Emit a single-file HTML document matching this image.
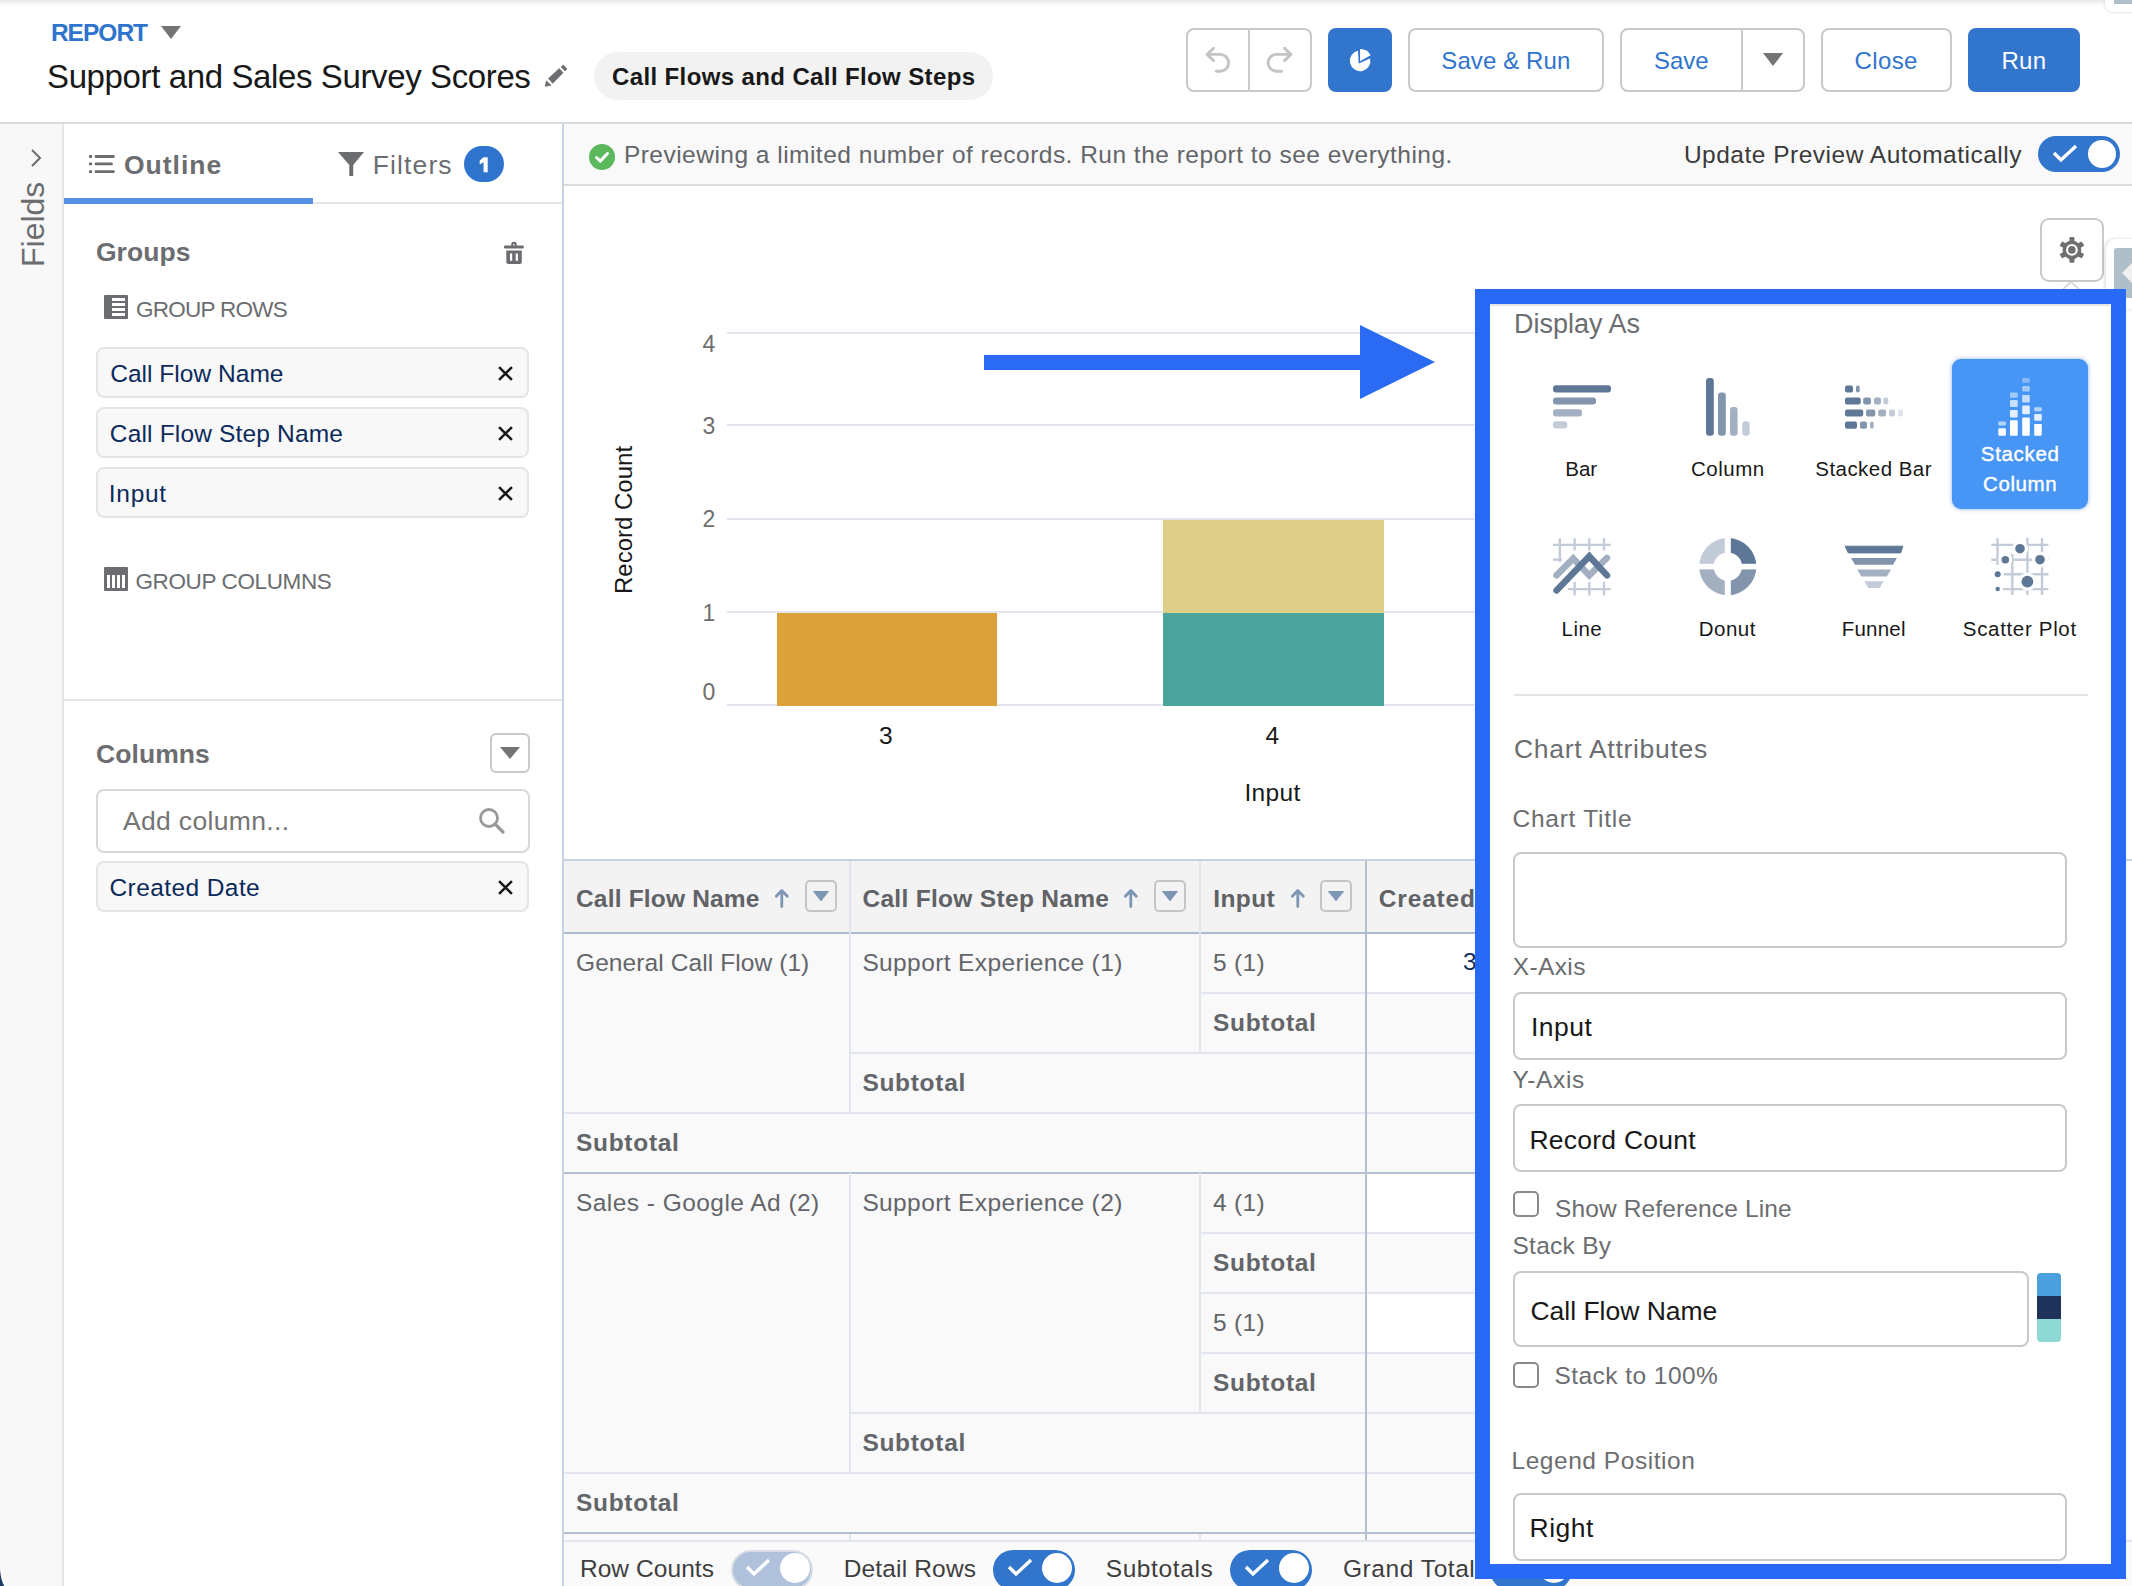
<!DOCTYPE html>
<html><head><meta charset="utf-8">
<style>
*{box-sizing:border-box;margin:0;padding:0}
html,body{width:2132px;height:1586px;overflow:hidden;background:#fff;font-family:"Liberation Sans",sans-serif;color:#181818}
.a{position:absolute}
.t{position:absolute;white-space:nowrap;line-height:1}
.btn{position:absolute;border:2px solid #c9c9c9;border-radius:8px;background:#fff}
.pill{position:absolute;left:96px;width:433px;height:51px;background:#f8f8f8;border:2px solid #e5e5e5;border-radius:8px}
</style></head>
<body>
<div class="a" style="left:0;top:0;width:2132px;height:6px;background:linear-gradient(#e9e9e9,#fff)"></div>
<div class="t" style="left:50.9px;top:21px;font-size:24.5px;font-weight:bold;letter-spacing:-0.98px;color:#2f74cc;">REPORT</div>
<svg class="a" style="left:161px;top:26px" width="20" height="14"><path d="M0 0H20L10 13Z" fill="#747474"/></svg>
<div class="t" style="left:47.0px;top:60px;font-size:33px;letter-spacing:-0.38px;color:#181818;">Support and Sales Survey Scores</div>
<svg class="a" style="left:540px;top:60px" width="32" height="32" viewBox="540 60 32 32"><g fill="#6b6d70" stroke="#6b6d70" stroke-width="0.8" stroke-linejoin="round"><path d="M561.2 66.9L563.3 65.1L566.8 69.1L565 70.9Z"/><path d="M548.6 78.5L559.2 68.6L563 72.7L552.7 83.3Z"/><path d="M546.3 80.9L551 85.2L545.3 86.3Z"/></g></svg>
<div class="a" style="left:594px;top:52px;width:399px;height:48px;border-radius:24px;background:#f2f2f2"></div>
<div class="t" style="left:612.0px;top:65px;font-size:24px;font-weight:bold;letter-spacing:0.38px;color:#181818;">Call Flows and Call Flow Steps</div>
<div class="btn" style="left:1186px;top:28px;width:126px;height:64px"></div>
<div class="a" style="left:1248px;top:29px;width:2px;height:61px;background:#c9c9c9"></div>
<svg class="a" style="left:1195px;top:40px" width="110" height="40" viewBox="1195 40 110 40"><g fill="none" stroke="#c4c4c4" stroke-width="2.9" stroke-linecap="round" stroke-linejoin="round"><path d="M1213.6 48.3L1207 54.4L1213.6 60.6M1207 54.4H1220.3A8.4 8.4 0 0 1 1220.3 71.2H1216.2"/><path d="M1284.5 48.3L1291 54.4L1284.5 60.6M1291 54.4H1276.5A8.4 8.4 0 0 0 1276.5 71.2H1281.7"/></g></svg>
<div class="a" style="left:1328px;top:28px;width:64px;height:64px;border-radius:8px;background:#3275cd"></div>
<svg class="a" style="left:1340px;top:40px" width="40" height="40" viewBox="1340 40 40 40"><path d="M1358.7 63.4L1358 50.8A10.3 10.3 0 1 0 1370.1 58.4Z" fill="#fff"/><path d="M1360 61.3V49.1A11.6 11.6 0 0 1 1370.6 55.3Z" fill="#fff"/></svg>
<div class="btn" style="left:1408px;top:28px;width:196px;height:64px"></div>
<div class="t" style="left:1441.3px;top:49px;font-size:24px;letter-spacing:0.11px;color:#2f74cc;">Save &amp; Run</div>
<div class="btn" style="left:1620px;top:28px;width:185px;height:64px"></div>
<div class="a" style="left:1741px;top:29px;width:2px;height:61px;background:#c9c9c9"></div>
<div class="t" style="left:1654.1px;top:49px;font-size:24px;letter-spacing:-0.07px;color:#2f74cc;">Save</div>
<svg class="a" style="left:1763px;top:53px" width="20" height="14"><path d="M0 0H20L10 13Z" fill="#747474"/></svg>
<div class="btn" style="left:1821px;top:28px;width:131px;height:64px"></div>
<div class="t" style="left:1854.6px;top:49px;font-size:24px;letter-spacing:0.35px;color:#2f74cc;">Close</div>
<div class="a" style="left:1968px;top:28px;width:112px;height:64px;border-radius:8px;background:#3275cd"></div>
<div class="t" style="left:2001.4px;top:49px;font-size:24px;letter-spacing:0.35px;color:#fff;">Run</div>
<div class="a" style="left:2105px;top:-10px;width:40px;height:22px;border-radius:8px;background:#fff;box-shadow:0 0 3px #ccc"></div>
<div class="a" style="left:2114px;top:0;width:20px;height:4px;background:#aebfca"></div>
<div class="a" style="left:0;top:122px;width:2132px;height:2px;background:#d8dadc"></div>
<div class="a" style="left:0;top:124px;width:64px;height:1462px;background:#f8f8f8;border-right:2px solid #e3e5e8"></div>
<svg class="a" style="left:29px;top:148px" width="14" height="20" viewBox="0 0 14 20"><path d="M3 2l8 8-8 8" fill="none" stroke="#6b6b6b" stroke-width="2"/></svg>
<div class="t" style="left:17px;top:267px;font-size:32px;color:#6b6d70;transform-origin:0 0;transform:rotate(-90deg)">Fields</div>
<svg class="a" style="left:0;top:1566px" width="10" height="20" viewBox="0 1566 10 20"><path d="M0 1569.5Q0.8 1580 4.2 1586H0Z" fill="#1c3a6a"/></svg>
<div class="a" style="left:64px;top:124px;width:500px;height:1462px;background:#fff;border-right:2px solid #c5d3e2"></div>
<div class="a" style="left:64px;top:202px;width:498px;height:2px;background:#e5e5e5"></div>
<div class="a" style="left:64px;top:198px;width:249px;height:6px;background:#5590e6"></div>
<svg class="a" style="left:86px;top:152px" width="32" height="24" viewBox="86 152 32 24"><g fill="#6b6d70"><rect x="89" y="155" width="3.1" height="2.9" rx="0.6"/><rect x="89" y="162.4" width="3.1" height="2.9" rx="0.6"/><rect x="89" y="170.2" width="3.1" height="2.9" rx="0.6"/><rect x="94.6" y="155" width="20.2" height="2.9" rx="1.4"/><rect x="94.6" y="162.4" width="18.3" height="2.9" rx="1.4"/><rect x="94.6" y="170.2" width="20.2" height="2.9" rx="1.4"/></g></svg>
<div class="t" style="left:124.0px;top:152px;font-size:26.5px;font-weight:bold;letter-spacing:1.0px;color:#6b6d70;">Outline</div>
<svg class="a" style="left:335px;top:148px" width="32" height="32" viewBox="335 148 32 32"><path d="M338 152H364L353.2 165V176H349.3V165Z" fill="#6b6d70"/></svg>
<div class="t" style="left:372.7px;top:152px;font-size:26.5px;letter-spacing:1.13px;color:#6b6d70;">Filters</div>
<div class="a" style="left:464px;top:146px;width:40px;height:36px;border-radius:18px;background:#2f74cc"></div>
<svg class="a" style="left:476px;top:154px" width="14" height="22" viewBox="476 154 14 22"><path d="M483.6 157.2H487.7V172.2H483.6V162.3L479.7 164.6V160.6Z" fill="#fff"/></svg>
<div class="t" style="left:95.9px;top:239px;font-size:26.5px;font-weight:bold;letter-spacing:0.06px;color:#6b6d70;">Groups</div>
<svg class="a" style="left:500px;top:238px" width="28" height="30" viewBox="500 238 28 30"><g fill="#6b6d70"><path d="M511.2 246V244.5A2.6 2.6 0 0 1 516.8 244.5V246H514.8V244.8A0.8 0.8 0 0 0 513.2 244.8V246Z"/><rect x="504" y="245.4" width="19.8" height="3.1" rx="1.2"/><path d="M506.3 250.6H521.8V262A2 2 0 0 1 519.8 264H508.3A2 2 0 0 1 506.3 262Z"/></g><rect x="510" y="253.5" width="2.2" height="7.3" fill="#fff"/><rect x="515.7" y="253.5" width="2.2" height="7.3" fill="#fff"/></svg>
<svg class="a" style="left:104px;top:295px" width="24" height="24" viewBox="0 0 24 24"><rect x="0" y="0" width="24" height="24" rx="1" fill="#6b6d70"/><rect x="8" y="3" width="13" height="3" fill="#fff"/><rect x="8" y="8" width="13" height="3" fill="#fff"/><rect x="8" y="13" width="13" height="3" fill="#fff"/><rect x="8" y="18" width="13" height="3" fill="#fff"/></svg>
<div class="t" style="left:136.0px;top:299px;font-size:22.5px;letter-spacing:-0.74px;color:#6b6d70;">GROUP ROWS</div>
<div class="pill" style="top:347px"></div>
<div class="t" style="left:110.2px;top:362px;font-size:24.5px;letter-spacing:0.03px;color:#0b2a5b;">Call Flow Name</div>
<svg class="a" style="left:498px;top:366px" width="15" height="15" viewBox="0 0 14 14"><path d="M1 1L13 13M13 1L1 13" stroke="#181818" stroke-width="2.4"/></svg>
<div class="pill" style="top:407px"></div>
<div class="t" style="left:109.8px;top:422px;font-size:24.5px;letter-spacing:0.17px;color:#0b2a5b;">Call Flow Step Name</div>
<svg class="a" style="left:498px;top:426px" width="15" height="15" viewBox="0 0 14 14"><path d="M1 1L13 13M13 1L1 13" stroke="#181818" stroke-width="2.4"/></svg>
<div class="pill" style="top:467px"></div>
<div class="t" style="left:108.8px;top:482px;font-size:24.5px;letter-spacing:0.72px;color:#0b2a5b;">Input</div>
<svg class="a" style="left:498px;top:486px" width="15" height="15" viewBox="0 0 14 14"><path d="M1 1L13 13M13 1L1 13" stroke="#181818" stroke-width="2.4"/></svg>
<svg class="a" style="left:104px;top:567px" width="24" height="24" viewBox="0 0 24 24"><rect x="0" y="0" width="24" height="24" rx="1" fill="#6b6d70"/><rect x="3" y="8" width="3" height="13" fill="#fff"/><rect x="8" y="8" width="3" height="13" fill="#fff"/><rect x="13" y="8" width="3" height="13" fill="#fff"/><rect x="18" y="8" width="3" height="13" fill="#fff"/></svg>
<div class="t" style="left:135.4px;top:571px;font-size:22.5px;letter-spacing:-0.37px;color:#6b6d70;">GROUP COLUMNS</div>
<div class="a" style="left:64px;top:699px;width:498px;height:2px;background:#e5e5e5"></div>
<div class="t" style="left:95.9px;top:741px;font-size:26.5px;font-weight:bold;letter-spacing:0.1px;color:#6b6d70;">Columns</div>
<div class="btn" style="left:490px;top:733px;width:40px;height:40px;border-radius:6px"></div>
<svg class="a" style="left:500px;top:747px" width="20" height="13"><path d="M0 0H20L10 12Z" fill="#747474"/></svg>
<div class="a" style="left:96px;top:789px;width:434px;height:64px;border:2px solid #d8d8d8;border-radius:8px;background:#fff"></div>
<div class="t" style="left:122.9px;top:808px;font-size:26.5px;letter-spacing:0.35px;color:#757575;">Add column...</div>
<svg class="a" style="left:478px;top:807px" width="28" height="28" viewBox="0 0 28 28"><circle cx="11" cy="11" r="8.5" fill="none" stroke="#9a9a9a" stroke-width="2.8"/><path d="M17 17l8 8" stroke="#9a9a9a" stroke-width="3.2" stroke-linecap="round"/></svg>
<div class="pill" style="top:861px"></div>
<div class="t" style="left:109.5px;top:876px;font-size:24.5px;letter-spacing:0.41px;color:#0b2a5b;">Created Date</div>
<svg class="a" style="left:498px;top:880px" width="15" height="15" viewBox="0 0 14 14"><path d="M1 1L13 13M13 1L1 13" stroke="#181818" stroke-width="2.4"/></svg>
<div class="a" style="left:564px;top:124px;width:1568px;height:62px;background:#f9f9f9;border-bottom:2px solid #d8dbdf"></div>
<svg class="a" style="left:589px;top:144px" width="26" height="26" viewBox="0 0 26 26"><circle cx="13" cy="13" r="13" fill="#5cb85c"/><path d="M7.5 13.5l3.8 3.6 7.2-7.6" fill="none" stroke="#fff" stroke-width="3" stroke-linecap="round" stroke-linejoin="round"/></svg>
<div class="t" style="left:623.9px;top:143px;font-size:24.5px;letter-spacing:0.48px;color:#636569;">Previewing a limited number of records. Run the report to see everything.</div>
<div class="t" style="left:1683.9px;top:143px;font-size:24.5px;letter-spacing:0.5px;color:#3a3a3a;">Update Preview Automatically</div>
<div class="a" style="left:2038px;top:136px;width:82px;height:36px;border-radius:18px;background:#3275cd"></div>
<div class="a" style="left:2088px;top:140px;width:28px;height:28px;border-radius:14px;background:#fff"></div>
<svg class="a" style="left:2051px;top:144px" width="28" height="20" viewBox="0 0 28 20"><path d="M3 9l7 7L25 2" fill="none" stroke="#fff" stroke-width="3.4"/></svg>
<div class="btn" style="left:2040px;top:218px;width:64px;height:64px;border-radius:9px"></div>
<svg class="a" style="left:2052px;top:230px" width="40" height="40" viewBox="2052 230 40 40"><g fill="#6f6f6f"><circle cx="2071.9" cy="249.9" r="9.4"/><rect x="2069.4" y="237.1" width="5" height="25.6" rx="1"/><rect x="2069.4" y="237.1" width="5" height="25.6" rx="1" transform="rotate(60 2071.9 249.9)"/><rect x="2069.4" y="237.1" width="5" height="25.6" rx="1" transform="rotate(120 2071.9 249.9)"/></g><circle cx="2071.9" cy="249.9" r="5.9" fill="#fff"/><circle cx="2071.9" cy="249.9" r="3.8" fill="#6f6f6f"/></svg>
<svg class="a" style="left:2060px;top:281px" width="22" height="12"><path d="M0 11L11 1L22 11" fill="#fff" stroke="#d0d0d0" stroke-width="1.5"/></svg>
<div class="a" style="left:2106px;top:239px;width:40px;height:70px;border-radius:10px;background:#fff;box-shadow:-1px 0 4px rgba(0,0,0,0.15)"></div>
<div class="a" style="left:2114px;top:248px;width:30px;height:50px;border-radius:3px;background:#aebfca"></div>
<svg class="a" style="left:2120px;top:262px" width="14" height="22"><path d="M12 1L2 11l10 10" fill="#f0f0f0"/></svg>
<div class="a" style="left:727px;top:332px;width:800px;height:2px;background:#e2e7ee"></div>
<div class="a" style="left:727px;top:424px;width:800px;height:2px;background:#e2e7ee"></div>
<div class="a" style="left:727px;top:518px;width:800px;height:2px;background:#e2e7ee"></div>
<div class="a" style="left:727px;top:611px;width:800px;height:2px;background:#e2e7ee"></div>
<div class="a" style="left:727px;top:704px;width:800px;height:2px;background:#e2e7ee"></div>
<div class="t" style="left:702.5px;top:333px;font-size:23px;color:#6e6e6e">4</div>
<div class="t" style="left:702.5px;top:415px;font-size:23px;color:#6e6e6e">3</div>
<div class="t" style="left:702.5px;top:508px;font-size:23px;color:#6e6e6e">2</div>
<div class="t" style="left:702.5px;top:602px;font-size:23px;color:#6e6e6e">1</div>
<div class="t" style="left:702.5px;top:681px;font-size:23px;color:#6e6e6e">0</div>
<div class="t" style="left:612px;top:594px;font-size:24px;color:#181818;transform-origin:0 0;transform:rotate(-90deg)">Record Count</div>
<div class="a" style="left:777px;top:613px;width:220px;height:93px;background:#dba23a"></div>
<div class="a" style="left:1163px;top:520px;width:221px;height:93px;background:#dfcd8a"></div>
<div class="a" style="left:1163px;top:613px;width:221px;height:93px;background:#4ca59c"></div>
<div class="t" style="left:879.0px;top:724px;font-size:24.5px;letter-spacing:-0.4px;color:#181818;">3</div>
<div class="t" style="left:1265.5px;top:724px;font-size:24.5px;letter-spacing:0.2px;color:#181818;">4</div>
<div class="t" style="left:1244.5px;top:781px;font-size:24.5px;letter-spacing:0.3px;color:#181818;">Input</div>
<svg class="a" style="left:980px;top:320px" width="460" height="84"><path d="M4 35H380V5L455 42L380 79V50H4Z" fill="#2b6af3"/></svg>
<div class="a" style="left:564px;top:859px;width:1568px;height:2px;background:#c9d2dd"></div>
<div class="a" style="left:564px;top:861px;width:1568px;height:71px;background:#f3f3f3"></div>
<div class="a" style="left:564px;top:932px;width:1568px;height:2px;background:#adbbcc"></div>
<div class="a" style="left:564px;top:934px;width:1568px;height:606px;background:#f9f9f9"></div>
<div class="a" style="left:1366px;top:934px;width:766px;height:58px;background:#fff"></div>
<div class="a" style="left:1366px;top:1174px;width:766px;height:58px;background:#fff"></div>
<div class="a" style="left:1366px;top:1294px;width:766px;height:58px;background:#fff"></div>
<div class="a" style="left:1200px;top:992px;width:932px;height:2px;background:#e1e6ee"></div>
<div class="a" style="left:850px;top:1052px;width:1282px;height:2px;background:#e1e6ee"></div>
<div class="a" style="left:564px;top:1112px;width:1568px;height:2px;background:#e1e6ee"></div>
<div class="a" style="left:564px;top:1172px;width:1568px;height:2px;background:#b4c0cf"></div>
<div class="a" style="left:1200px;top:1232px;width:932px;height:2px;background:#e1e6ee"></div>
<div class="a" style="left:1200px;top:1292px;width:932px;height:2px;background:#e1e6ee"></div>
<div class="a" style="left:1200px;top:1352px;width:932px;height:2px;background:#e1e6ee"></div>
<div class="a" style="left:850px;top:1412px;width:1282px;height:2px;background:#e1e6ee"></div>
<div class="a" style="left:564px;top:1472px;width:1568px;height:2px;background:#e1e6ee"></div>
<div class="a" style="left:564px;top:1532px;width:1568px;height:2px;background:#b4c0cf"></div>
<div class="a" style="left:849px;top:861px;width:2px;height:251px;background:#e1e6ee"></div>
<div class="a" style="left:849px;top:1173px;width:2px;height:299px;background:#e1e6ee"></div>
<div class="a" style="left:1199px;top:861px;width:2px;height:191px;background:#e1e6ee"></div>
<div class="a" style="left:1199px;top:1173px;width:2px;height:239px;background:#e1e6ee"></div>
<div class="a" style="left:1365px;top:861px;width:2px;height:679px;background:#b4c0cf"></div>
<div class="a" style="left:849px;top:1534px;width:2px;height:7px;background:#e1e6ee"></div>
<div class="a" style="left:1199px;top:1534px;width:2px;height:7px;background:#e1e6ee"></div>
<div class="t" style="left:576.0px;top:887px;font-size:24.5px;font-weight:bold;letter-spacing:0.18px;color:#606266;">Call Flow Name</div>
<div class="t" style="left:862.4px;top:887px;font-size:24.5px;font-weight:bold;letter-spacing:0.31px;color:#606266;">Call Flow Step Name</div>
<div class="t" style="left:1213.3px;top:887px;font-size:24.5px;font-weight:bold;letter-spacing:0.38px;color:#606266;">Input</div>
<div class="t" style="left:1378.8px;top:887px;font-size:24.5px;font-weight:bold;letter-spacing:0.83px;color:#606266;">Created</div>
<svg class="a" style="left:775px;top:888px" width="14" height="20" viewBox="0 0 14 20"><path d="M6.8 18.5V3.5M1.3 8.3L6.8 2.5L12.3 8.3" fill="none" stroke="#7d96b4" stroke-width="2.8" stroke-linecap="round" stroke-linejoin="round"/></svg>
<div class="a" style="left:805px;top:880px;width:32px;height:32px;border:2px solid #c4c5c9;border-radius:5px;background:#f3f3f3"></div>
<svg class="a" style="left:813px;top:891px" width="16" height="11"><path d="M0 0H16L8 10Z" fill="#7d96b4" stroke="#7d96b4" stroke-width="0.6" stroke-linejoin="round"/></svg>
<svg class="a" style="left:1123.5px;top:888px" width="14" height="20" viewBox="0 0 14 20"><path d="M6.8 18.5V3.5M1.3 8.3L6.8 2.5L12.3 8.3" fill="none" stroke="#7d96b4" stroke-width="2.8" stroke-linecap="round" stroke-linejoin="round"/></svg>
<div class="a" style="left:1154px;top:880px;width:32px;height:32px;border:2px solid #c4c5c9;border-radius:5px;background:#f3f3f3"></div>
<svg class="a" style="left:1162px;top:891px" width="16" height="11"><path d="M0 0H16L8 10Z" fill="#7d96b4" stroke="#7d96b4" stroke-width="0.6" stroke-linejoin="round"/></svg>
<svg class="a" style="left:1291px;top:888px" width="14" height="20" viewBox="0 0 14 20"><path d="M6.8 18.5V3.5M1.3 8.3L6.8 2.5L12.3 8.3" fill="none" stroke="#7d96b4" stroke-width="2.8" stroke-linecap="round" stroke-linejoin="round"/></svg>
<div class="a" style="left:1320px;top:880px;width:32px;height:32px;border:2px solid #c4c5c9;border-radius:5px;background:#f3f3f3"></div>
<svg class="a" style="left:1328px;top:891px" width="16" height="11"><path d="M0 0H16L8 10Z" fill="#7d96b4" stroke="#7d96b4" stroke-width="0.6" stroke-linejoin="round"/></svg>
<div class="t" style="left:576.0px;top:951px;font-size:24.5px;letter-spacing:0.09px;color:#636569;">General Call Flow (1)</div>
<div class="t" style="left:862.4px;top:951px;font-size:24.5px;letter-spacing:0.38px;color:#636569;">Support Experience (1)</div>
<div class="t" style="left:1213.0px;top:951px;font-size:24.5px;letter-spacing:0.32px;color:#636569;">5 (1)</div>
<div class="t" style="left:1463px;top:950px;font-size:24.5px;color:#16325c">3</div>
<div class="t" style="left:1213.0px;top:1011px;font-size:24.5px;font-weight:bold;letter-spacing:0.7px;color:#636569">Subtotal</div>
<div class="t" style="left:862.4px;top:1071px;font-size:24.5px;font-weight:bold;letter-spacing:0.7px;color:#636569">Subtotal</div>
<div class="t" style="left:576px;top:1131px;font-size:24.5px;font-weight:bold;letter-spacing:0.7px;color:#636569">Subtotal</div>
<div class="t" style="left:576.0px;top:1191px;font-size:24.5px;letter-spacing:0.45px;color:#636569;">Sales - Google Ad (2)</div>
<div class="t" style="left:862.4px;top:1191px;font-size:24.5px;letter-spacing:0.38px;color:#636569;">Support Experience (2)</div>
<div class="t" style="left:1213.0px;top:1191px;font-size:24.5px;letter-spacing:0.32px;color:#636569;">4 (1)</div>
<div class="t" style="left:1213.0px;top:1251px;font-size:24.5px;font-weight:bold;letter-spacing:0.7px;color:#636569">Subtotal</div>
<div class="t" style="left:1213.0px;top:1311px;font-size:24.5px;letter-spacing:0.32px;color:#636569;">5 (1)</div>
<div class="t" style="left:1213.0px;top:1371px;font-size:24.5px;font-weight:bold;letter-spacing:0.7px;color:#636569">Subtotal</div>
<div class="t" style="left:862.4px;top:1431px;font-size:24.5px;font-weight:bold;letter-spacing:0.7px;color:#636569">Subtotal</div>
<div class="t" style="left:576px;top:1491px;font-size:24.5px;font-weight:bold;letter-spacing:0.7px;color:#636569">Subtotal</div>
<div class="a" style="left:564px;top:1540px;width:1568px;height:46px;background:#fafafa;border-top:2px solid #e3e8ef"></div>
<div class="t" style="left:579.9px;top:1557px;font-size:24.5px;letter-spacing:0.07px;color:#3e3e3e;">Row Counts</div>
<div class="t" style="left:843.7px;top:1557px;font-size:24.5px;letter-spacing:0.16px;color:#3e3e3e;">Detail Rows</div>
<div class="t" style="left:1105.7px;top:1557px;font-size:24.5px;letter-spacing:0.61px;color:#3e3e3e;">Subtotals</div>
<div class="t" style="left:1343.0px;top:1557px;font-size:24.5px;letter-spacing:0.56px;color:#3e3e3e;">Grand Total</div>
<div class="a" style="left:731px;top:1550px;width:82px;height:40px;border-radius:20px;background:#b0c1dc;border:2px solid #d9dee5;"></div>
<div class="a" style="left:780px;top:1553px;width:30px;height:30px;border-radius:15px;background:#fff"></div>
<svg class="a" style="left:744px;top:1558px" width="28" height="20" viewBox="0 0 28 20"><path d="M3 9l7 7L25 2" fill="none" stroke="#fff" stroke-width="3.4"/></svg>
<div class="a" style="left:993px;top:1550px;width:82px;height:40px;border-radius:20px;background:#3275cd;"></div>
<div class="a" style="left:1042px;top:1553px;width:30px;height:30px;border-radius:15px;background:#fff"></div>
<svg class="a" style="left:1006px;top:1558px" width="28" height="20" viewBox="0 0 28 20"><path d="M3 9l7 7L25 2" fill="none" stroke="#fff" stroke-width="3.4"/></svg>
<div class="a" style="left:1230px;top:1550px;width:82px;height:40px;border-radius:20px;background:#3275cd;"></div>
<div class="a" style="left:1279px;top:1553px;width:30px;height:30px;border-radius:15px;background:#fff"></div>
<svg class="a" style="left:1243px;top:1558px" width="28" height="20" viewBox="0 0 28 20"><path d="M3 9l7 7L25 2" fill="none" stroke="#fff" stroke-width="3.4"/></svg>
<div class="a" style="left:1490px;top:1550px;width:82px;height:40px;border-radius:20px;background:#3275cd;"></div>
<div class="a" style="left:1539px;top:1553px;width:30px;height:30px;border-radius:15px;background:#fff"></div>
<svg class="a" style="left:1503px;top:1558px" width="28" height="20" viewBox="0 0 28 20"><path d="M3 9l7 7L25 2" fill="none" stroke="#fff" stroke-width="3.4"/></svg>

<div class="a" style="left:2125px;top:861px;width:7px;height:677px;background:#fff"></div>
<div class="a" style="left:1475px;top:289px;width:650px;height:1289px;background:#fff"></div>
<div class="a" style="left:1490px;top:304px;width:620px;height:2px;background:#e5e5e5"></div>
<div class="t" style="left:1513.9px;top:311px;font-size:27px;letter-spacing:0.01px;color:#6b6d70;">Display As</div>
<div class="a" style="left:1952px;top:359px;width:136px;height:150px;border-radius:9px;background:#4795f5;box-shadow:0 0 4px rgba(40,100,210,0.5)"></div>
<svg class="a" style="left:1550px;top:376px" width="64" height="62" viewBox="1550 376 64 62">
<rect x="1553" y="385.3" width="58" height="7.2" rx="3" fill="#5f7796"/>
<rect x="1553" y="397.4" width="43" height="7.2" rx="3" fill="#8295ad"/>
<rect x="1553" y="409.3" width="29" height="7.2" rx="3" fill="#a3b0c2"/>
<rect x="1553" y="421.3" width="14.3" height="7.2" rx="3" fill="#c2cbd7"/>
</svg>
<svg class="a" style="left:1700px;top:374px" width="56" height="66" viewBox="1700 374 56 66">
<rect x="1706" y="378" width="7.8" height="57.7" rx="3" fill="#5f7796"/>
<rect x="1718" y="392.5" width="7.8" height="43.2" rx="3" fill="#8295ad"/>
<rect x="1730" y="407" width="7.6" height="28.7" rx="3" fill="#a3b0c2"/>
<rect x="1742.3" y="421.3" width="7.3" height="14.4" rx="3" fill="#c2cbd7"/>
</svg>
<svg class="a" style="left:1840px;top:380px" width="70" height="54" viewBox="1840 380 70 54"><rect x="1845" y="385.4" width="8" height="7.1" rx="2" fill="#5f7796"/><rect x="1856" y="385.4" width="3.7000000000000455" height="7.1" rx="2" fill="#8295ad"/><rect x="1845" y="397.5" width="15.700000000000045" height="7.1" rx="2" fill="#5f7796"/><rect x="1863.2" y="397.5" width="7.7999999999999545" height="7.1" rx="2" fill="#8295ad"/><rect x="1874" y="397.5" width="7" height="7.1" rx="2" fill="#a3b0c2"/><rect x="1883.4" y="397.5" width="4.899999999999864" height="7.1" rx="2" fill="#c2cbd7"/><rect x="1845" y="409.4" width="18.200000000000045" height="7.1" rx="2" fill="#5f7796"/><rect x="1866" y="409.4" width="9.299999999999955" height="7.1" rx="2" fill="#8295ad"/><rect x="1878.2" y="409.4" width="7.7999999999999545" height="7.1" rx="2" fill="#a3b0c2"/><rect x="1889" y="409.4" width="6" height="7.1" rx="2" fill="#c2cbd7"/><rect x="1898" y="409.4" width="4.7999999999999545" height="7.1" rx="2" fill="#dde3ea"/><rect x="1845" y="421.6" width="12" height="7.1" rx="2" fill="#5f7796"/><rect x="1860" y="421.6" width="7" height="7.1" rx="2" fill="#8295ad"/><rect x="1870" y="421.6" width="3.7000000000000455" height="7.1" rx="2" fill="#a3b0c2"/></svg>
<svg class="a" style="left:1990px;top:372px" width="60" height="70" viewBox="1990 372 60 70"><rect x="1998.3" y="428.3" width="7.6" height="7.5" rx="1" fill="#fff" fill-opacity="1"/><rect x="1998.3" y="421.6" width="7.6" height="4.0" rx="1" fill="#fff" fill-opacity="0.6"/><rect x="2010" y="420.2" width="7.7" height="15.600000000000023" rx="1" fill="#fff" fill-opacity="1"/><rect x="2010" y="410" width="7.7" height="7.5" rx="1" fill="#fff" fill-opacity="0.85"/><rect x="2010" y="400" width="7.7" height="7" rx="1" fill="#fff" fill-opacity="0.7"/><rect x="2010" y="392.6" width="7.7" height="5.199999999999989" rx="1" fill="#fff" fill-opacity="0.5"/><rect x="2022.2" y="417.5" width="7.6" height="18.30000000000001" rx="1" fill="#fff" fill-opacity="1"/><rect x="2022.2" y="405.6" width="7.6" height="8.599999999999966" rx="1" fill="#fff" fill-opacity="0.85"/><rect x="2022.2" y="395" width="7.6" height="7.600000000000023" rx="1" fill="#fff" fill-opacity="0.7"/><rect x="2022.2" y="386" width="7.6" height="5.600000000000023" rx="1" fill="#fff" fill-opacity="0.5"/><rect x="2022.2" y="378" width="7.6" height="4.699999999999989" rx="1" fill="#fff" fill-opacity="0.35"/><rect x="2034.2" y="424" width="7.6" height="11.800000000000011" rx="1" fill="#fff" fill-opacity="1"/><rect x="2034.2" y="414" width="7.6" height="6.699999999999989" rx="1" fill="#fff" fill-opacity="0.85"/><rect x="2034.2" y="407.2" width="7.6" height="4.0" rx="1" fill="#fff" fill-opacity="0.6"/></svg>
<svg class="a" style="left:1550px;top:535px" width="64" height="64" viewBox="1550 535 64 64">
<g stroke="#c2cbd7" stroke-width="2.4" fill="none">
<path d="M1553 544.9H1610.7M1559.8 538.3V562M1574.6 538.3V550.6M1589.3 538.3V550.6M1604 538.3V550.6M1553 559.6H1562"/>
<path d="M1568 589.1H1610.7M1574.6 582V595.5M1589.3 582V595.5M1604 582V595.5"/>
</g>
<path d="M1556.5 575.4L1573.2 558.4L1589.3 575.4L1607 557.9" fill="none" stroke="#a3b0c2" stroke-width="6.5" stroke-linecap="round" stroke-linejoin="miter"/>
<path d="M1556.5 590.4L1589.3 556.3L1607 575.4" fill="none" stroke="#5f7796" stroke-width="6.5" stroke-linecap="round" stroke-linejoin="miter"/>
</svg>
<svg class="a" style="left:1695px;top:534px" width="66" height="66" viewBox="1695 534 66 66"><path d="M1727.80 538.00A28.6 28.6 0 0 1 1756.40 566.60L1742.00 566.60A14.2 14.2 0 0 0 1727.80 552.40Z" fill="#5f7796"/><path d="M1756.40 566.60A28.6 28.6 0 0 1 1727.80 595.20L1727.80 580.80A14.2 14.2 0 0 0 1742.00 566.60Z" fill="#8295ad"/><path d="M1727.80 595.20A28.6 28.6 0 0 1 1699.20 566.60L1713.60 566.60A14.2 14.2 0 0 0 1727.80 580.80Z" fill="#a3b0c2"/><path d="M1699.20 566.60A28.6 28.6 0 0 1 1727.80 538.00L1727.80 552.40A14.2 14.2 0 0 0 1713.60 566.60Z" fill="#c2cbd7"/><rect x="1724.8" y="534" width="6" height="66" fill="#fff"/><rect x="1695" y="563.8" width="66" height="5.6" fill="#fff"/></svg>
<svg class="a" style="left:1840px;top:540px" width="70" height="54" viewBox="1840 540 70 54">
<path d="M1845.1 546.2H1902.8L1900.7 552.9H1848.3Z" fill="#5f7796" stroke="#5f7796" stroke-width="1" stroke-linejoin="round"/>
<path d="M1851 558H1896.9L1893 564.7H1855Z" fill="#8295ad"/>
<path d="M1857.2 569.4H1891L1886.9 576.6H1861.3Z" fill="#a3b0c2"/>
<path d="M1864.3 581.2H1883.6L1879.6 587.9H1868.3Z" fill="#c2cbd7"/>
</svg>
<svg class="a" style="left:1988px;top:535px" width="64" height="64" viewBox="1988 535 64 64"><g stroke="#c2cbd7" stroke-width="2.4"><path d="M1991.3 544.9H2048.4M1991.3 559.7H2048.4M2002 574.2H2048.4M2000 589.1H2048.4M1997.5 538V565M2012.3 554V595M2027.4 538V595M2042 538V595"/></g><circle cx="2020" cy="548.7" r="8.0" fill="#fff"/><circle cx="2005.3" cy="559.7" r="7.0" fill="#fff"/><circle cx="2040" cy="559.7" r="8.0" fill="#fff"/><circle cx="1997.7" cy="574.2" r="6.2" fill="#fff"/><circle cx="2027.4" cy="581.6" r="9.100000000000001" fill="#fff"/><circle cx="1997.7" cy="589" r="5.4" fill="#fff"/><circle cx="2020" cy="548.7" r="4.8" fill="#5f7796"/><circle cx="2005.3" cy="559.7" r="3.8" fill="#5f7796"/><circle cx="2040" cy="559.7" r="4.8" fill="#5f7796"/><circle cx="1997.7" cy="574.2" r="3" fill="#5f7796"/><circle cx="2027.4" cy="581.6" r="5.9" fill="#5f7796"/><circle cx="1997.7" cy="589" r="2.2" fill="#5f7796"/></svg>
<div class="t" style="left:1565.3px;top:459px;font-size:20.5px;letter-spacing:0.0px;color:#181818;">Bar</div>
<div class="t" style="left:1691.0px;top:459px;font-size:20.5px;letter-spacing:0.5px;color:#181818;">Column</div>
<div class="t" style="left:1815.3px;top:459px;font-size:20.5px;letter-spacing:0.45px;color:#181818;">Stacked Bar</div>
<div class="t" style="left:1561.5px;top:619px;font-size:20.5px;letter-spacing:0.5px;color:#181818;">Line</div>
<div class="t" style="left:1698.8px;top:619px;font-size:20.5px;letter-spacing:0.48px;color:#181818;">Donut</div>
<div class="t" style="left:1841.7px;top:619px;font-size:20.5px;letter-spacing:0.22px;color:#181818;">Funnel</div>
<div class="t" style="left:1962.8px;top:619px;font-size:20.5px;letter-spacing:0.67px;color:#181818;">Scatter Plot</div>
<div class="t" style="left:1980.8px;top:444px;font-size:20.5px;letter-spacing:0.68px;color:#fff;-webkit-text-stroke:0.4px #fff">Stacked</div>
<div class="t" style="left:1983.0px;top:474px;font-size:20.5px;letter-spacing:0.6px;color:#fff;-webkit-text-stroke:0.4px #fff">Column</div>
<div class="a" style="left:1514px;top:694px;width:574px;height:2px;background:#e5e5e5"></div>
<div class="t" style="left:1514.0px;top:736px;font-size:26.5px;letter-spacing:0.71px;color:#6b6d70;">Chart Attributes</div>
<div class="t" style="left:1512.5px;top:807px;font-size:24.5px;letter-spacing:0.74px;color:#6b6d70;">Chart Title</div>
<div class="t" style="left:1512.8px;top:955px;font-size:24.5px;letter-spacing:0.36px;color:#6b6d70;">X-Axis</div>
<div class="t" style="left:1512.5px;top:1068px;font-size:24.5px;letter-spacing:0.64px;color:#6b6d70;">Y-Axis</div>
<div class="t" style="left:1512.5px;top:1234px;font-size:24.5px;letter-spacing:0.26px;color:#6b6d70;">Stack By</div>
<div class="t" style="left:1511.5px;top:1449px;font-size:24.5px;letter-spacing:0.54px;color:#6b6d70;">Legend Position</div>
<div class="t" style="left:1555.0px;top:1197px;font-size:24.5px;letter-spacing:0.13px;color:#6b6d70;">Show Reference Line</div>
<div class="t" style="left:1554.4px;top:1364px;font-size:24.5px;letter-spacing:0.46px;color:#6b6d70;">Stack to 100%</div>
<div class="a" style="left:1513px;top:852px;width:554px;height:96px;border:2px solid #c9c9c9;border-radius:8px;background:#fff"></div>
<div class="a" style="left:1513px;top:992px;width:554px;height:68px;border:2px solid #c9c9c9;border-radius:8px;background:#fff"></div>
<div class="a" style="left:1513px;top:1104px;width:554px;height:68px;border:2px solid #c9c9c9;border-radius:8px;background:#fff"></div>
<div class="a" style="left:1513px;top:1271px;width:516px;height:76px;border:2px solid #c9c9c9;border-radius:8px;background:#fff"></div>
<div class="a" style="left:1513px;top:1493px;width:554px;height:68px;border:2px solid #c9c9c9;border-radius:8px;background:#fff"></div>
<div class="t" style="left:1531.0px;top:1014px;font-size:26.5px;letter-spacing:0.48px;color:#181818;">Input</div>
<div class="t" style="left:1529.5px;top:1127px;font-size:26.5px;letter-spacing:0.23px;color:#181818;">Record Count</div>
<div class="t" style="left:1530.5px;top:1298px;font-size:26.5px;letter-spacing:-0.02px;color:#181818;">Call Flow Name</div>
<div class="t" style="left:1529.5px;top:1515px;font-size:26.5px;letter-spacing:0.52px;color:#181818;">Right</div>
<div class="a" style="left:1513px;top:1191px;width:26px;height:26px;border:2px solid #8a8a8a;border-radius:5px;background:#fff"></div>
<div class="a" style="left:1513px;top:1362px;width:26px;height:26px;border:2px solid #8a8a8a;border-radius:5px;background:#fff"></div>
<div class="a" style="left:2037px;top:1273px;width:24px;height:69px;border-radius:4px;overflow:hidden;background:linear-gradient(#4a9fdc 0 33%,#1e3359 33% 67%,#8ed9d3 67%)"></div>
<div class="a" style="left:1475px;top:289px;width:651px;height:1290px;border:15px solid #2869f5"></div>
</body></html>
